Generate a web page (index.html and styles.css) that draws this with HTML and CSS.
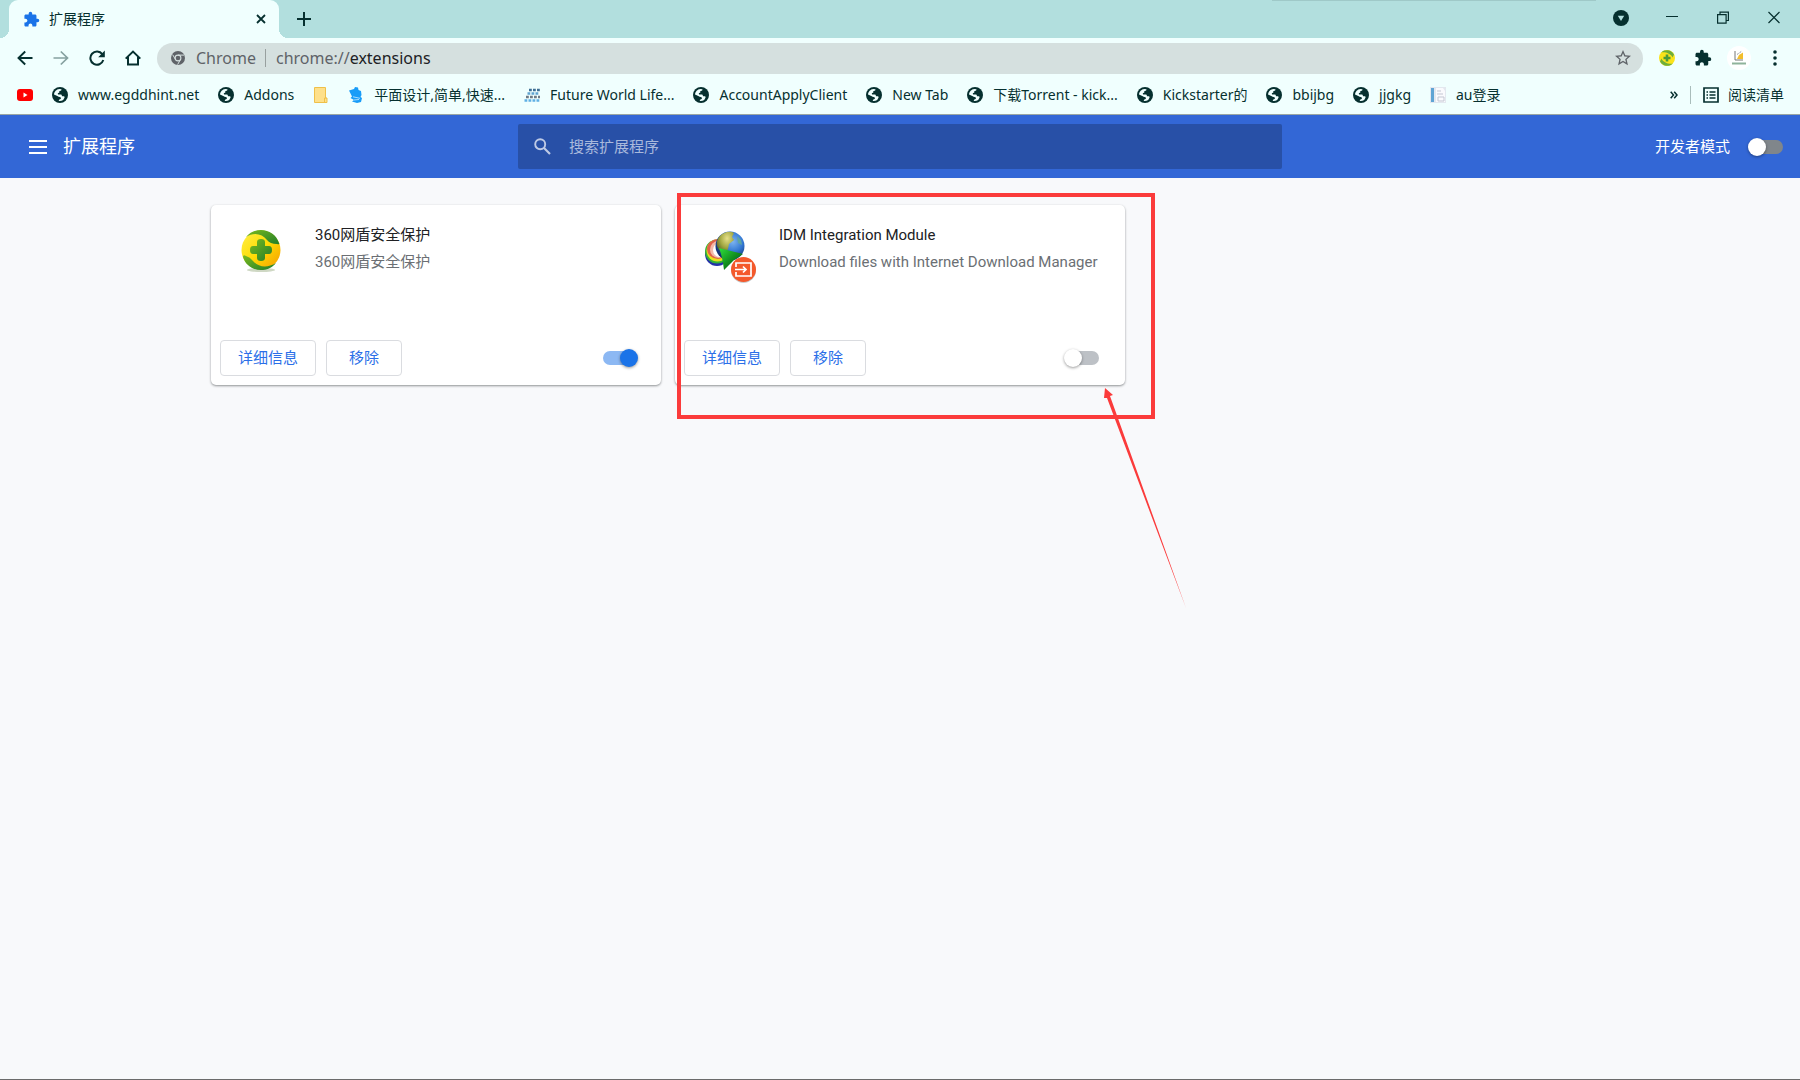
FILE: index.html
```html
<!DOCTYPE html>
<html lang="zh-CN">
<head>
<meta charset="utf-8">
<meta name="viewport" content="width=device-width, initial-scale=1">
<title>扩展程序</title>
<link rel="stylesheet" href="styles.css">
</head>
<body>
<svg class="sprite" aria-hidden="true">
  <defs>
    <linearGradient id="gold" x1="0" y1="0" x2="1" y2="1"><stop offset="0" stop-color="#fff04a"/><stop offset=".5" stop-color="#fedc05"/><stop offset="1" stop-color="#f59a00"/></linearGradient>
    <linearGradient id="leaf" x1="0" y1="0" x2="1" y2="1"><stop offset="0" stop-color="#7cba1e"/><stop offset="1" stop-color="#1f7d2a"/></linearGradient>
    <radialGradient id="earth" cx=".6" cy=".35" r=".7"><stop offset="0" stop-color="#7db4f0"/><stop offset=".5" stop-color="#3277d2"/><stop offset="1" stop-color="#0a1f5c"/></radialGradient>
    <radialGradient id="land" cx=".6" cy=".3" r=".8"><stop offset="0" stop-color="#e6e08a"/><stop offset=".5" stop-color="#a3a842"/><stop offset="1" stop-color="#4a4f1c"/></radialGradient>
    <linearGradient id="arrowgreen" x1="0" y1="0" x2="1" y2="1"><stop offset="0" stop-color="#2fe03c"/><stop offset=".5" stop-color="#12901f"/><stop offset="1" stop-color="#064c10"/></linearGradient>
  </defs>
  <symbol id="puzzle" viewBox="0 0 24 24"><path fill="currentColor" d="M20.500 11H19V7c0-1.100-.9-2-2-2h-4V3.500a2.500 2.500 0 0 0-5 0V5H4c-1.100 0-2 .9-2 2v3.800h1.500c1.490 0 2.700 1.210 2.700 2.700s-1.210 2.700-2.700 2.700H2V20c0 1.100.9 2 2 2h3.800v-1.500c0-1.490 1.210-2.700 2.700-2.700s2.700 1.210 2.700 2.700V22H17c1.100 0 2-.9 2-2v-4h1.500a2.500 2.500 0 0 0 0-5z"/></symbol>
  <symbol id="globe" viewBox="0 0 16 16"><circle cx="8" cy="8" r="8" fill="#06302f"/><path fill="#f0fffe" d="M2 7.600C2.200 4.600 4.400 2.200 7.300 1.900L9.500 2.200 9.200 3.600 7.200 4.200 7.400 5.500 5.800 6.200 6 7.400 9.300 7.600 10.200 9.200 12.200 9.200 12.600 10.600 11.200 12.900C9.800 13.900 8.200 14.200 6.600 13.900L7.600 12.300 8.900 11.900 8.600 10.300 6.600 9.700 5.300 9.100Z"/></symbol>
</svg>

<header class="browser">
  <div class="tabstrip">
    <div class="tab">
      <svg class="tab-icon" aria-hidden="true"><use href="#puzzle"/></svg>
      <span class="tab-title">扩展程序</span>
      <button class="plain tab-close" aria-label="关闭标签页"><svg width="10" height="10" viewBox="0 0 10 10"><path d="M1 1l8 8M9 1L1 9" stroke="currentColor" stroke-width="1.800"/></svg></button>
    </div>
    <button class="plain new-tab" aria-label="新标签页"><svg width="14" height="14" viewBox="0 0 14 14"><path d="M7 0v14M0 7h14" stroke="currentColor" stroke-width="2"/></svg></button>
    <div class="window-controls">
      <button class="plain" aria-label="搜索标签页"><svg width="16" height="16" viewBox="0 0 16 16"><circle cx="8" cy="8" r="8" fill="currentColor"/><path d="M4.800 5.800h6.400L8 11z" fill="#b2dfde"/></svg></button>
      <button class="plain" aria-label="最小化"><svg width="12" height="16" viewBox="0 0 12 16"><path d="M0 6.500h12" stroke="currentColor"/></svg></button>
      <button class="plain" aria-label="还原"><svg width="12" height="16" viewBox="0 0 12 16"><path d="M.6 4.600h8.500v8.500H.6zM3 4.500V2.100h8.400v8.400H9.200" fill="none" stroke="currentColor" stroke-width="1.200"/></svg></button>
      <button class="plain" aria-label="关闭"><svg width="12" height="16" viewBox="0 0 12 16"><path d="M.5 2l11 11M11.500 2L.5 13" stroke="currentColor" stroke-width="1.200"/></svg></button>
    </div>
  </div>

  <div class="toolbar">
    <button class="plain" aria-label="后退"><svg width="16" height="16" viewBox="0 0 16 16"><path d="M15.500 8H2M8.200 1.500L1.500 8l6.700 6.500" fill="none" stroke="currentColor" stroke-width="1.900"/></svg></button>
    <button class="plain faded" aria-label="前进" disabled><svg width="16" height="16" viewBox="0 0 16 16"><path d="M.5 8H14M7.800 1.500L14.500 8l-6.700 6.500" fill="none" stroke="currentColor" stroke-width="1.700"/></svg></button>
    <button class="plain" aria-label="重新加载"><svg width="16" height="16" viewBox="0 0 16 16"><path d="M13.300 4.200A6.600 6.600 0 1 0 14.300 10" fill="none" stroke="currentColor" stroke-width="2"/><path d="M15.800.6v6.600H9.200z" fill="currentColor"/></svg></button>
    <button class="plain" aria-label="主页"><svg width="16" height="16" viewBox="0 0 16 16"><path d="M.7 8.600L8 1.600l7.300 7M3 7v7.600h10V7" fill="none" stroke="currentColor" stroke-width="2"/></svg></button>
    <form class="omnibox">
      <svg width="14" height="14" viewBox="0 0 14 14" aria-hidden="true"><circle cx="7" cy="7" r="7" fill="#5f6368"/><circle cx="7" cy="7" r="2.900" fill="none" stroke="#d5e0df" stroke-width="1.100"/><path d="M7 4.100h6M4.500 8.500L1.600 3.600M9.500 8.500L6.600 13.600" stroke="#d5e0df"/></svg>
      <span class="origin">Chrome</span>
      <span class="address" contenteditable="plaintext-only" role="textbox" aria-label="地址">chrome://<b>extensions</b></span>
      <button type="button" class="plain star" aria-label="添加书签"><svg width="16" height="16" viewBox="0 0 24 24"><path fill="currentColor" d="M24 8.700l-8.600-.8L12 0 8.600 7.900 0 8.700l6.500 5.700L4.600 22.800 12 18.300l7.400 4.500-1.900-8.400zM12 16.100l-4.500 2.700 1.200-5.100-4-3.500 5.300-.4L12 4.900l2 4.900 5.300.4-4 3.500 1.200 5.100z"/></svg></button>
    </form>
    <div class="actions">
      <button class="plain" aria-label="360网盾"><svg width="16" height="16" viewBox="0 0 16 16"><circle cx="8" cy="8" r="8" fill="#fbe31a"/><path d="M2.200 2.500A8 8 0 0 1 15 4.500L13.500 7.500C12 3.500 6 1.500 2.200 2.500zM13.800 13.500A8 8 0 0 1 1 11.500L2.500 8.500C4 12.500 10 14.500 13.800 13.500z" fill="#6fae3a"/><path d="M6.700 4.500h2.600v2.200h2.200v2.600H9.300v2.200H6.700V9.300H4.500V6.700h2.200z" fill="#4a9a3a"/></svg></button>
      <button class="plain" aria-label="扩展程序菜单"><svg width="18" height="18"><use href="#puzzle"/></svg></button>
      <button class="plain" aria-label="个人资料"><svg width="24" height="24" viewBox="0 0 24 24"><circle cx="12" cy="12" r="12" fill="#fff"/><path d="M8 5v9h8" fill="none" stroke="#777"/><path d="M10 13l2-4 4-2.500V13z" fill="#f2bd2c"/><path d="M10 8.500l5-3.500" stroke="#999" stroke-dasharray="2 1"/><path d="M5 17.500h14" stroke="#8fb39b" stroke-width="2"/></svg></button>
      <button class="plain" aria-label="更多"><svg width="16" height="16" viewBox="0 0 16 16"><g fill="currentColor"><circle cx="8" cy="2" r="1.800"/><circle cx="8" cy="8" r="1.800"/><circle cx="8" cy="14" r="1.800"/></g></svg></button>
    </div>
  </div>

  <nav class="bookmarks" aria-label="书签栏">
    <a href="#" aria-label="YouTube"><svg viewBox="0 0 16 16"><rect y="2" width="16" height="12" rx="3" fill="#f00"/><path d="M6.500 5.500v5l4-2.500z" fill="#fff"/></svg></a>
    <a href="#"><svg><use href="#globe"/></svg>www.egddhint.net</a>
    <a href="#"><svg><use href="#globe"/></svg>Addons</a>
    <a href="#" aria-label="文件夹"><svg viewBox="0 0 16 16"><path d="M1.500.5h11v10.500h1.500v4.500H1.500z" fill="#fee08a" stroke="#efc04a"/><path d="M11.500 15v-4h2" fill="none" stroke="#efc04a"/></svg></a>
    <a href="#"><svg viewBox="0 0 16 16"><path d="M1 3.500l5-1.500 1-2 3 .5.500 2.500L13 4l.5 4-1 2 1.500 1-1 4-4 1-5-1.500 2-1.500-3.500-2L4 9.500z" fill="#189cf8"/><path d="M5 9.800l7 1.500M6 13l5-.5" fill="none" stroke="#a8dcff"/></svg>平面设计,简单,快速...</a>
    <a href="#"><svg viewBox="0 0 16 16"><g fill="none" stroke-width="2.600" stroke-dasharray="2.800 1.200"><path d="M5 3h11" stroke="#3f6f95"/><path d="M3.500 6.500h12" stroke="#5fa3d0"/><path d="M2 10h14" stroke="#6e7b86"/><path d="M.5 13.500h15" stroke="#5fb0e4"/></g></svg>Future World Life...</a>
    <a href="#"><svg><use href="#globe"/></svg>AccountApplyClient</a>
    <a href="#"><svg><use href="#globe"/></svg>New Tab</a>
    <a href="#"><svg><use href="#globe"/></svg>下载Torrent - kick...</a>
    <a href="#"><svg><use href="#globe"/></svg>Kickstarter的</a>
    <a href="#"><svg><use href="#globe"/></svg>bbijbg</a>
    <a href="#"><svg><use href="#globe"/></svg>jjgkg</a>
    <a href="#"><svg viewBox="0 0 16 16"><path d="M0 0h16v16H0z" fill="#e3e8ef"/><path d="M1 1h3v14H1z" fill="#5fa4d4"/><path d="M6 1h7l2 3v11H6z" fill="#fafafd"/><path d="M7 4h4M7 7h6M8 10h6v4H8z" fill="none" stroke="#c3c7d3"/></svg>au登录</a>
    <div class="bookmarks-end">
      <button class="plain" aria-label="更多书签"><svg width="8" height="8" viewBox="0 0 8 8"><path d="M.7.7L3.500 4 .7 7.300M4.200.7L7 4 4.200 7.300" fill="none" stroke="currentColor" stroke-width="1.500"/></svg></button>
      <button class="plain reading"><svg width="16" height="16" viewBox="0 0 16 16"><path d="M1 1h14v14H1z" fill="none" stroke="currentColor" stroke-width="1.700"/><path d="M3.500 5h1.500M6.500 5h6M3.500 8H5M6.500 8h6M3.500 11H5M6.500 11h6" stroke="currentColor" stroke-width="1.500"/></svg>阅读清单</button>
    </div>
  </nav>
</header>

<div class="page-header">
  <div class="heading">
    <button class="plain" aria-label="主菜单"><svg width="18" height="14" viewBox="0 0 18 14"><path d="M0 1h18M0 7h18M0 13h18" stroke="currentColor" stroke-width="2"/></svg></button>
    <h1>扩展程序</h1>
  </div>
  <label class="search">
    <svg width="17" height="17" viewBox="0 0 17 17" aria-hidden="true"><circle cx="6.200" cy="6.200" r="5" fill="none" stroke="currentColor" stroke-width="1.900"/><path d="M10 10l6 6" stroke="currentColor" stroke-width="2.100"/></svg>
    <input type="search" placeholder="搜索扩展程序" aria-label="搜索扩展程序">
  </label>
  <label class="dev-mode">开发者模式<input type="checkbox" class="toggle toggle-dark"></label>
</div>

<main class="cards">
  <article class="card">
    <div class="info">
      <svg class="logo" viewBox="-1 -1 54 54" aria-hidden="true">
        <ellipse cx="27" cy="46" rx="14" ry="2" fill="#cfd8c4"/>
        <circle cx="27" cy="26" r="19.500" fill="url(#gold)"/>
        <path d="M12 13C22 1 41 5 45 19q1 2-2 1-7 0-10-4C28 9 19 8 12 13z" fill="url(#leaf)"/>
        <path d="M42 39C32 51 13 47 9 33q0-3 3-1 4 1 7 5c6 7 15 7 23 2z" fill="url(#leaf)"/>
        <path d="M23 18q0-3 4-3t4 3v4h4q3 0 3 4t-3 4h-4v4q0 3-4 3t-4-3v-4h-4q-3 0-3-4t3-4h4z" fill="url(#leaf)"/>
      </svg>
      <div class="text">
        <h2>360网盾安全保护</h2>
        <p>360网盾安全保护</p>
      </div>
    </div>
    <div class="buttons">
      <button class="outlined">详细信息</button>
      <button class="outlined remove">移除</button>
      <input type="checkbox" class="toggle" aria-label="启用 360网盾安全保护" checked>
    </div>
  </article>

  <article class="card">
    <div class="info">
      <svg class="logo" viewBox="0 0 54 54" aria-hidden="true">
        <ellipse cx="20" cy="31" rx="12" ry="12" fill="#2432a8"/>
        <ellipse cx="20" cy="28.500" rx="12" ry="12" fill="#35b336"/>
        <ellipse cx="20.500" cy="27.500" rx="11" ry="11" fill="#e8e01c"/>
        <ellipse cx="21" cy="26" rx="11" ry="10" fill="#e0624a"/>
        <ellipse cx="21.500" cy="26.500" rx="8.500" ry="8.500" fill="#f3b9a8"/>
        <ellipse cx="22.500" cy="27" rx="6.500" ry="7" fill="#fff"/>
        <circle cx="33" cy="23" r="14.500" fill="url(#earth)"/>
        <path d="M22 14c5-6 12-6 15-4l-2 4 2 3-5 4-1 5-3 5c-7-3-11-10-6-17z" fill="url(#land)"/>
        <path d="M40 13l4 4 1 5-4-2z" fill="#5fa5a0"/>
        <path d="M22 25l24 6-9 6-10 10c-1-8-2-14-5-22z" fill="url(#arrowgreen)"/>
        <circle cx="46.500" cy="47.500" r="12.500" fill="#c9ccce"/>
        <circle cx="46.500" cy="46.500" r="12.500" fill="#f4592b"/>
        <path d="M39 44v-4h15v13H39v-4M38 46.500h10M46 43.500l3 3-3 3" fill="none" stroke="#fff" stroke-width="1.700"/>
      </svg>
      <div class="text">
        <h2>IDM Integration Module</h2>
        <p>Download files with Internet Download Manager</p>
      </div>
    </div>
    <div class="buttons">
      <button class="outlined">详细信息</button>
      <button class="outlined remove">移除</button>
      <input type="checkbox" class="toggle" aria-label="启用 IDM Integration Module">
    </div>
    <div class="callout-box"></div>
    <svg class="callout-arrow" viewBox="0 0 90 226" aria-hidden="true"><path d="M5 3l8 7-3 1 76 212L7 13l-3 0z" fill="#fb3b3b"/></svg>
  </article>
</main>
</body>
</html>
```

FILE: styles.css
```css
* { box-sizing: border-box; }

body {
  margin: 0;
  min-height: 100vh;
  border-bottom: 1px solid #6b6b6b;
  background: #f8f9fb;
  font: 15px/24px Roboto, "Noto Sans CJK SC", sans-serif;
}

.sprite { position: absolute; width: 0; height: 0; }
svg { display: block; flex: none; }

.plain {
  display: flex;
  align-items: center;
  justify-content: center;
  padding: 0;
  border: 0;
  background: none;
  color: inherit;
  font: inherit;
}

.browser {
  border-bottom: 1px solid #9aa6a3;
  background: #f0fffe;
  color: #06302f;
  font: 14px/20px "Noto Sans", "Noto Sans CJK SC", sans-serif;
}

.tabstrip {
  position: relative;
  display: flex;
  height: 38px;
  padding-left: 9px;
  background: #b2dfde;
}
.tabstrip::after {
  content: "";
  position: absolute;
  top: 0;
  right: 204px;
  width: 324px;
  height: 1px;
  background: #9fc9c8;
}

.tab {
  position: relative;
  display: flex;
  align-items: center;
  width: 270px;
  padding: 0 13px 0 14px;
  border-radius: 9px 9px 0 0;
  background: #f0fffe;
}
.tab::before,
.tab::after {
  content: "";
  position: absolute;
  bottom: 0;
  width: 9px;
  height: 9px;
}
.tab::before { right: 100%; background: radial-gradient(circle at 0 0, #b2dfde 9px, #f0fffe 9px); }
.tab::after { left: 100%; background: radial-gradient(circle at 100% 0, #b2dfde 9px, #f0fffe 9px); }
.tab-icon { width: 17px; height: 17px; color: #1a73e8; }
.tab-title { flex: 1; margin-left: 9px; }
.new-tab { width: 50px; }

.window-controls {
  display: flex;
  gap: 35px;
  height: 35px;
  margin-left: auto;
  padding-right: 18px;
}
.window-controls button { min-width: 16px; }

.toolbar {
  display: flex;
  align-items: center;
  gap: 20px;
  height: 40px;
  padding: 0 13px 0 17px;
}
.faded { opacity: .45; }

.omnibox {
  display: flex;
  flex: 1;
  align-items: center;
  height: 31px;
  margin: 0 0 0 -4px;
  padding: 0 12px 0 14px;
  border-radius: 16px;
  background: #d5e0df;
  color: #5f6368;
  font-size: 16px;
}
.origin {
  margin: 0 10px 0 11px;
  padding-right: 9px;
  border-right: 1px solid #98a09f;
  line-height: 18px;
}
.address { flex: 1; }
.address b { color: #202124; font-weight: 400; }

.actions { display: flex; align-items: center; gap: 12px; margin-left: -8px; }
.actions button { width: 24px; }

.bookmarks {
  display: flex;
  align-items: center;
  gap: 19px;
  height: 36px;
  padding: 0 16px 3px 17px;
  white-space: nowrap;
}
.bookmarks a {
  display: flex;
  align-items: center;
  gap: 10px;
  color: inherit;
  text-decoration: none;
}
.bookmarks a svg { width: 16px; height: 16px; }
.bookmarks-end { display: flex; align-items: center; gap: 12px; margin-left: auto; }
.reading { gap: 9px; padding-left: 12px; border-left: 1px solid #a9bdbb; line-height: 18px; }

.page-header {
  display: grid;
  grid-template-columns: 1fr minmax(0, 764px) 1fr;
  align-items: center;
  height: 63px;
  padding: 0 17px;
  background: #3367d6;
  color: #fff;
}
.heading { display: flex; align-items: center; gap: 16px; padding-left: 12px; }
.heading h1 { margin: 0; font-size: 18px; font-weight: 400; }

.search {
  display: flex;
  align-items: center;
  gap: 18px;
  height: 45px;
  padding-left: 16px;
  border-radius: 2px;
  background: #2850a7;
  color: #bfcae5;
}
.search input {
  flex: 1;
  min-width: 0;
  padding: 0;
  border: 0;
  outline: 0;
  background: none;
  color: #fff;
  font: inherit;
}
.search input::placeholder { color: #a9b9dc; }

.dev-mode { display: flex; align-items: center; justify-self: end; gap: 21px; }

.toggle {
  display: flex;
  align-items: center;
  appearance: none;
  width: 32px;
  height: 14px;
  margin: 0;
  border-radius: 7px;
  background: #bdc1c6;
}
.toggle::before {
  content: "";
  width: 18px;
  height: 18px;
  flex: none;
  margin: 0 -3px;
  border-radius: 50%;
  background: #fff;
  box-shadow: 0 1px 3px rgba(0, 0, 0, .4);
}
.toggle:checked { justify-content: flex-end; background: #8cb8f3; }
.toggle:checked::before { background: #1a73e8; }
.toggle-dark { background: #80868b; }

.cards {
  display: grid;
  grid-template-columns: repeat(auto-fill, 450px);
  justify-content: center;
  gap: 14px;
  padding: 27px 0;
}

.card {
  position: relative;
  display: flex;
  flex-direction: column;
  justify-content: space-between;
  height: 180px;
  border-radius: 5px;
  background: #fff;
  box-shadow: 0 1px 2px rgba(60, 64, 67, .4), 0 1px 3px rgba(60, 64, 67, .2);
}
.info { display: flex; gap: 28px; padding: 18px 20px 0 22px; }
.logo { width: 54px; height: 54px; overflow: visible; }
.text h2,
.text p { margin: 0 0 3px; font-size: 15px; font-weight: 400; }
.text h2 { color: #202124; }
.text p { color: #6b6f74; }

.buttons {
  display: flex;
  align-items: center;
  gap: 10px;
  padding: 0 26px 9px 9px;
}
.outlined {
  height: 36px;
  padding: 0 17px;
  border: 1px solid #dadce0;
  border-radius: 4px;
  background: #fff;
  color: #2b6fe8;
  font: inherit;
}
.remove { padding: 0 22px; }
.buttons .toggle { margin-left: auto; }

.callout-box {
  position: absolute;
  top: -12px;
  left: 2px;
  width: 478px;
  height: 226px;
  border: 4px solid #fb3b3b;
  pointer-events: none;
}
.callout-arrow {
  position: absolute;
  top: 180px;
  left: 425px;
  width: 90px;
  height: 226px;
  pointer-events: none;
}
```
